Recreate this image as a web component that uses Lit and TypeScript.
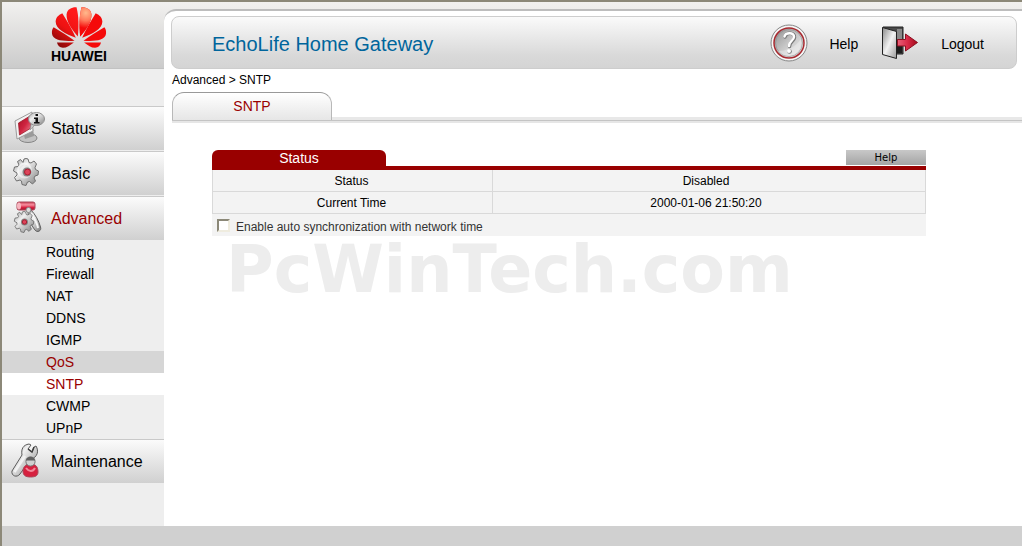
import { LitElement, html, css, svg, nothing } from "lit";
import { customElement, property } from "lit/decorators.js";
import { classMap } from "lit/directives/class-map.js";

const metal = svg`
  <defs>
    <linearGradient id="metal" x1="0" y1="0" x2="1" y2="1">
      <stop offset="0" stop-color="#a0a0a0" />
      <stop offset=".35" stop-color="#f0f0f0" />
      <stop offset=".65" stop-color="#bdbdbd" />
      <stop offset="1" stop-color="#7c7c7c" />
    </linearGradient>
    <linearGradient id="ruby" x1="0" y1="0" x2="1" y2="1">
      <stop offset="0" stop-color="#a80f25" />
      <stop offset=".5" stop-color="#cf2440" />
      <stop offset="1" stop-color="#f08a98" />
    </linearGradient>
    <linearGradient id="tube" x1="0" y1="0" x2="0" y2="1">
      <stop offset="0" stop-color="#c93a50" />
      <stop offset=".35" stop-color="#f790a0" />
      <stop offset=".7" stop-color="#d41f3e" />
      <stop offset="1" stop-color="#a01830" />
    </linearGradient>
  </defs>`;

const gearPath =
  "M-2 -13 Q0 -14 2 -13 L3 -9.500 L5 -9 L8 -11 L10.500 -8 L9 -4.500 L9.500 -2.500 L12.500 -1 L12 3 L9 4 L8 6 L9.500 9 L6.500 12 L3.500 9.500 L1.500 10 L0 13.500 L-4 12.500 L-4.500 9 L-6 8 L-9.500 9 L-11.500 5.500 L-9 3 L-9 1 L-12.500 -1 L-11.500 -5 L-8 -5.500 L-7 -7 L-8.500 -10.500 L-5.500 -12.500 L-3 -9.500 Z";

const icons = {
  status: svg`
    <ellipse cx="15" cy="27" rx="9" ry="4.500" fill="#c2c2c2" stroke="#858585" />
    <path d="M10 21 L20 17 L21 25 L12 28 Z" fill="#9a9a9a" />
    <path d="M2 10 L19 1 L20 20 L4 28 Z" fill="#f2f2f2" stroke="#9c9c9c" />
    <path d="M5.500 12 L17 5 L18 17 L6.500 24 Z" fill="url(#ruby)" stroke="#a01828" stroke-width=".8" />
    <path d="M18 13 L17 19 L23 13 Z" fill="#c9c9c9" stroke="#888" stroke-width=".6" />
    <ellipse cx="23.500" cy="8" rx="8" ry="6.500" fill="url(#metal)" stroke="#909090" />
    <path d="M21 6.500 H25 V11 H26.500 V12.500 H21 V11 H22.500 V8 H21 Z M22.500 3 H25 V5 H22.500 Z" fill="#111" />`,
  basic: svg`
    <path d=${gearPath} transform="translate(13 16)" fill="url(#metal)" stroke="#6e6e6e" stroke-linejoin="round" />
    <ellipse cx="11.500" cy="14.500" rx="6.500" ry="7" fill="none" stroke="#fff" stroke-opacity=".5" stroke-width="2" />
    <circle cx="14" cy="16" r="4.500" fill="#858585" />
    <circle cx="14.500" cy="16" r="3" fill="#dd4459" stroke="#a81e32" />`,
  advanced: svg`
    <path d="M15 10 C15 17 18 24 22 29 C24 32 29 30 27.500 26 C26 20 22 13 18 9 Z" fill="url(#metal)" stroke="#606060" />
    <path d="M18 12 C20 16 24 21 25 27" fill="none" stroke="#f6f6f6" stroke-width="2" />
    <path d=${gearPath} transform="translate(11 21) scale(.78)" fill="url(#metal)" stroke="#666" stroke-linejoin="round" />
    <circle cx="11.500" cy="21" r="3.500" fill="#858585" />
    <circle cx="11.500" cy="21" r="2.200" fill="#dd4459" stroke="#a81e32" />
    <rect x="4" y="1" width="18" height="8" rx="2" fill="url(#tube)" stroke="#a9485a" />
    <ellipse cx="6" cy="5" rx="2" ry="3.500" fill="#f7b6c0" />
    <circle cx="15.500" cy="9" r="2.500" fill="#dedede" stroke="#888" />`,
  maintenance: svg`
    <path d="M-1 27 L9 11 C8 5 10 1 16 0 L18 1 L15 5 L19 8 L21 3 L23 2 C26 7 25 13 17 16 L7 30 C4 34 -2 32 -1 27 Z" fill="url(#metal)" stroke="#5a5a5a" stroke-linejoin="round" />
    <path d="M1.500 28 L12 12" fill="none" stroke="#f2f2f2" stroke-width="2.500" />
    <path d="M15 5 L19 8 L21 3" fill="none" stroke="#3c3c3c" stroke-width="1.500" />
    <path d="M10 27 C10 22 14 20 17.500 20 C22 20 25 22 25 28 C25 32 22 33 17.500 33 C12 33 10 31 10 27 Z" fill="#d6213f" stroke="#a9485a" />
    <path d="M13 24 C16 28 20 28 22 24" fill="none" stroke="#f28a9b" stroke-width="2" />
    <circle cx="17.500" cy="17.500" r="4.600" fill="#d0d0d0" stroke="#777" />
    <path d="M13 16.500 C13 11.500 22 11.500 22 16.500 Z" fill="#606060" />`,
};

type IconName = keyof typeof icons;

interface Section {
  label: string;
  icon: IconName;
  open?: boolean;
  items?: { label: string; state?: "hover" | "current" }[];
}

const sections: Section[] = [
  { label: "Status", icon: "status" },
  { label: "Basic", icon: "basic" },
  {
    label: "Advanced",
    icon: "advanced",
    open: true,
    items: [
      { label: "Routing" },
      { label: "Firewall" },
      { label: "NAT" },
      { label: "DDNS" },
      { label: "IGMP" },
      { label: "QoS", state: "hover" },
      { label: "SNTP", state: "current" },
      { label: "CWMP" },
      { label: "UPnP" },
    ],
  },
  { label: "Maintenance", icon: "maintenance" },
];

@customElement("brand-logo")
class BrandLogo extends LitElement {
  static styles = css`
    :host {
      display: flex;
      flex-direction: column;
      align-items: center;
      padding-top: 4px;
      box-sizing: border-box;
      height: 67px;
      padding-right: 8px;
      background: linear-gradient(#f2f1ef, #cbcbcb);
      border-bottom: 1px solid #c2c2c2;
    }
    svg {
      display: block;
      flex: none;
    }
    .name {
      font: bold 14px/14px "Liberation Sans", Arial, sans-serif;
      color: #000;
    }
  `;

  render() {
    const half = svg`
      <path d="M235 109 C216 86 200 66 201 42 C203 26 218 20 231 21 C238 48 238 80 235 109 Z" />
      <path d="M229 113 C198 101 168 88 168 64 C169 50 178 44 188 39 C202 62 217 86 229 113 Z" />
      <path d="M225 122 C192 124 160 122 157 101 C156 92 158 86 162 81 C183 94 206 107 225 122 Z" />
      <path d="M223 127 C211 136 202 143 190 143 C180 142 174 136 172 127 Z" />`;
    return html`
      <svg width="56" height="43" viewBox="154 18 169 128" aria-hidden="true">
        <defs>
          <linearGradient id="left" gradientUnits="userSpaceOnUse" x1="156" y1="130" x2="225" y2="40">
            <stop offset="0" stop-color="#7d0808" />
            <stop offset=".55" stop-color="#ee1212" />
            <stop offset="1" stop-color="#ff1a1a" />
          </linearGradient>
          <radialGradient id="glow" gradientUnits="userSpaceOnUse" cx="218" cy="38" r="46">
            <stop offset="0" stop-color="#ffb98c" />
            <stop offset=".5" stop-color="#ff7a5c" />
            <stop offset="1" stop-color="#f50a0a" />
          </radialGradient>
        </defs>
        <g fill="url(#left)">${half}</g>
        <g fill="#f50a0a" transform="matrix(-1 0 0 1 477 0)">${half}</g>
        <path
          fill="url(#glow)"
          transform="matrix(-1 0 0 1 477 0)"
          d="M235 109 C216 86 200 66 201 42 C203 26 218 20 231 21 C238 48 238 80 235 109 Z"
        />
      </svg>
      <span class="name">HUAWEI</span>
    `;
  }
}

@customElement("nav-section")
class NavSection extends LitElement {
  @property({ attribute: false }) section!: Section;

  static styles = css`
    :host {
      display: block;
    }
    a {
      color: #000;
      text-decoration: none;
    }
    .head {
      display: flex;
      align-items: center;
      gap: 5px;
      box-sizing: border-box;
      height: 44px;
      margin-bottom: 1px;
      padding-left: 10px;
      border-top: 1px solid #c9c9c9;
      background: linear-gradient(#fbfbfb, #d0d0d0);
      font-size: 16px;
    }
    .head svg {
      flex: none;
      overflow: visible;
    }
    .open,
    .hover,
    .current {
      color: #990000;
    }
    ul {
      margin: 0;
      padding: 0;
      list-style: none;
    }
    .item {
      display: block;
      padding-left: 44px;
      font-size: 14px;
      line-height: 22px;
    }
    .hover {
      background: #d6d6d6;
    }
    .current {
      background: #fff;
    }
  `;

  render() {
    const { label, icon, open, items } = this.section;
    return html`
      <a href="#" class=${classMap({ head: true, open: !!open })}>
        <svg width="34" height="36" viewBox="-1 0 34 36" aria-hidden="true">${metal}${icons[icon]}</svg>
        ${label}
      </a>
      ${items
        ? html`<ul>
            ${items.map(
              (item) => html`<li>
                <a
                  href="#"
                  class=${classMap({
                    item: true,
                    hover: item.state === "hover",
                    current: item.state === "current",
                  })}
                  >${item.label}</a
                >
              </li>`
            )}
          </ul>`
        : nothing}
    `;
  }
}

@customElement("page-banner")
class PageBanner extends LitElement {
  static styles = css`
    :host {
      display: flex;
      align-items: center;
      box-sizing: border-box;
      height: 53px;
      padding: 0 32px 0 40px;
      border: 1px solid #cdcdcd;
      border-radius: 8px;
      background: linear-gradient(#fafafa, #d9d9d9 75%, #d4d4d4);
    }
    h1 {
      margin: 0 auto 0 0;
      padding-top: 3px;
      font-size: 20px;
      font-weight: normal;
      color: #00659c;
    }
    a {
      display: flex;
      align-items: center;
      gap: 21px;
      color: #000;
      font-size: 14px;
      text-decoration: none;
    }
    a + a {
      margin-left: 24px;
    }
    svg {
      flex: none;
    }
    span {
      padding-top: 2px;
    }
  `;

  render() {
    return html`
      <h1>EchoLife Home Gateway</h1>
      <a href="#">
        <svg width="38" height="38" viewBox="0 0 38 38" aria-hidden="true">
          <defs>
            <linearGradient id="disc" x1="0" y1="0" x2="1" y2="1">
              <stop offset="0" stop-color="#8f8f8f" />
              <stop offset=".5" stop-color="#c9c9c9" />
              <stop offset="1" stop-color="#f2f2f2" />
            </linearGradient>
          </defs>
          <circle cx="19" cy="19" r="18" fill="#f6f6f6" stroke="#858585" />
          <circle cx="19" cy="19" r="15" fill="url(#disc)" stroke="#a82a30" stroke-width="1.500" />
          <circle cx="19" cy="19" r="13.500" fill="none" stroke="#8a8a8a" stroke-opacity=".6" />
          <path d="M8 27 C15 27 25 24 31 15 C32 24 27 31 19 32 C14 32 10 30 8 27 Z" fill="#fff" fill-opacity=".3" />
          <g fill="none" stroke-linecap="round">
            <path d="M15 13 C16 8 25 8 24.500 13.500 C24 18 19.500 17 19.500 22.500" stroke="#777" stroke-width="3.500" />
            <path d="M14.500 12.500 C15.500 8 24.500 8 24 13 C23.500 17.500 19 16.500 19 22" stroke="#fff" stroke-width="2.500" />
          </g>
          <circle cx="19.500" cy="27.500" r="2.300" fill="#777" />
          <circle cx="19" cy="27" r="2" fill="#fff" />
        </svg>
        <span>Help</span>
      </a>
      <a href="#">
        <svg width="38" height="34" viewBox="0 0 38 34" aria-hidden="true">
          <defs>
            <linearGradient id="leaf" x1="0" y1="0" x2="1" y2="1">
              <stop offset="0" stop-color="#8a8a8a" />
              <stop offset=".5" stop-color="#f2f2f2" />
              <stop offset="1" stop-color="#9a9a9a" />
            </linearGradient>
            <linearGradient id="arrow" x1="0" y1="0" x2="1" y2="0">
              <stop offset="0" stop-color="#e86078" />
              <stop offset=".5" stop-color="#d92a48" />
              <stop offset="1" stop-color="#a00818" />
            </linearGradient>
          </defs>
          <path d="M1 1 H21 V28 H9 Z" fill="#4a4a4a" stroke="#222" />
          <path d="M15 3 H20 V13 H15 Z" fill="#8a8a8a" />
          <path d="M15 20 H20 V27 H15 Z" fill="#1c1c1c" />
          <path d="M.5 1.500 L14.500 5.500 V32.500 L.5 28.500 Z" fill="url(#leaf)" stroke="#222" />
          <path d="M15.500 13.500 H23.500 V8 L35.500 16.500 L23.500 25 V20 H15.500 Z" fill="url(#arrow)" stroke="#8c1020" />
        </svg>
        <span>Logout</span>
      </a>
    `;
  }
}

@customElement("app-root")
class AppRoot extends LitElement {
  static styles = css`
    :host {
      display: flex;
      flex-direction: column;
      box-sizing: border-box;
      min-height: 100vh;
      border: solid #8c8878;
      border-width: 2px 0 0 2px;
      background: #fff;
      color: #000;
      font-family: "Liberation Sans", Arial, sans-serif;
    }
    .body {
      display: flex;
      flex: 1;
    }
    aside {
      flex: none;
      width: 162px;
      background: #eeeeee;
    }
    nav {
      padding-top: 37px;
    }
    main {
      flex: 1;
      min-width: 0;
      padding-top: 7px;
      background: linear-gradient(#f2f1ef, #dcdcdc 40px, #fff 40px);
    }
    .sheet {
      padding: 5px 0 0 7px;
      border-top: 2px solid #bdbdbd;
      border-top-left-radius: 12px;
      background: #fff;
    }
    page-banner {
      margin-right: 5px;
    }
    .crumbs {
      margin: 4px 1px 5px;
      font-size: 12px;
      line-height: 14px;
    }
    .tabs {
      display: flex;
      margin-left: 1px;
      border-bottom: 1px solid #c4c4c4;
      background: linear-gradient(#e8e8e8, #e8e8e8) bottom / 100% 3px no-repeat;
    }
    .tab {
      box-sizing: border-box;
      width: 160px;
      border: 1px solid #a0a0a0;
      border-color: #999 #b8b8b8 transparent;
      border-bottom: 0;
      border-radius: 12px 12px 0 0;
      background: linear-gradient(#fff, #e6e6e6);
      color: #990000;
      font-size: 14px;
      line-height: 27px;
      text-align: center;
      text-decoration: none;
    }
    .ledge {
      height: 2px;
      margin-left: 1px;
      background: #e6e6e6;
    }
    .panel {
      max-width: 714px;
      margin: 27px 41px 0;
    }
    .panel-head {
      display: flex;
      justify-content: space-between;
      align-items: flex-start;
      height: 16px;
      border-bottom: 4px solid #990000;
    }
    h2 {
      width: 174px;
      margin: 0;
      border-radius: 6px 6px 0 0;
      background: #990000;
      color: #fff;
      font-size: 14px;
      font-weight: normal;
      line-height: 16px;
      text-align: center;
    }
    .help {
      width: 80px;
      height: 15px;
      padding: 0;
      border: 0;
      background: linear-gradient(#c8c8c8, #a4a4a4);
      color: #000;
      font: 10px/15px "DejaVu Sans", Verdana, sans-serif;
    }
    table {
      width: 100%;
      border-collapse: collapse;
      background: #f3f3f3;
      font-size: 12px;
      line-height: 19px;
      text-align: center;
    }
    th,
    td {
      padding: 2px 6px 0 0;
      border: 1px solid #d9d9d9;
      border-top: 0;
      font-weight: normal;
    }
    th {
      width: 277px;
      padding-right: 2px;
    }
    .option {
      display: flex;
      align-items: center;
      gap: 6px;
      height: 22px;
      padding-left: 5px;
      background: #f3f3f3;
      color: #333;
      font-size: 12px;
    }
    .option label {
      padding-top: 3px;
    }
    .option input {
      appearance: none;
      box-sizing: border-box;
      width: 13px;
      height: 13px;
      margin: 0;
      border: 2px solid;
      border-color: #8b8878 #efecdf #efecdf #8b8878;
      background: #fff;
    }
    .mark {
      margin: 0;
      padding-left: 14px;
      color: #ededed;
      font: bold 65px/68px "DejaVu Sans", Verdana, sans-serif;
    }
    footer {
      height: 20px;
      background: #d0d0d0;
    }
  `;

  render() {
    return html`
      <div class="body">
        <aside>
          <brand-logo></brand-logo>
          <nav>${sections.map((s) => html`<nav-section .section=${s}></nav-section>`)}</nav>
        </aside>
        <main>
          <div class="sheet">
            <page-banner></page-banner>
            <p class="crumbs">Advanced &gt; SNTP</p>
            <div class="tabs"><a class="tab" href="#">SNTP</a></div>
            <div class="ledge"></div>
            <section class="panel">
              <div class="panel-head">
                <h2>Status</h2>
                <button class="help" type="button">Help</button>
              </div>
              <table>
                <tbody>
                  <tr>
                    <th scope="row">Status</th>
                    <td>Disabled</td>
                  </tr>
                  <tr>
                    <th scope="row">Current Time</th>
                    <td>2000-01-06 21:50:20</td>
                  </tr>
                </tbody>
              </table>
              <div class="option">
                <input id="auto-sync" type="checkbox" />
                <label for="auto-sync">Enable auto synchronization with network time</label>
              </div>
              <p class="mark">PcWinTech.com</p>
            </section>
          </div>
        </main>
      </div>
      <footer></footer>
    `;
  }
}
